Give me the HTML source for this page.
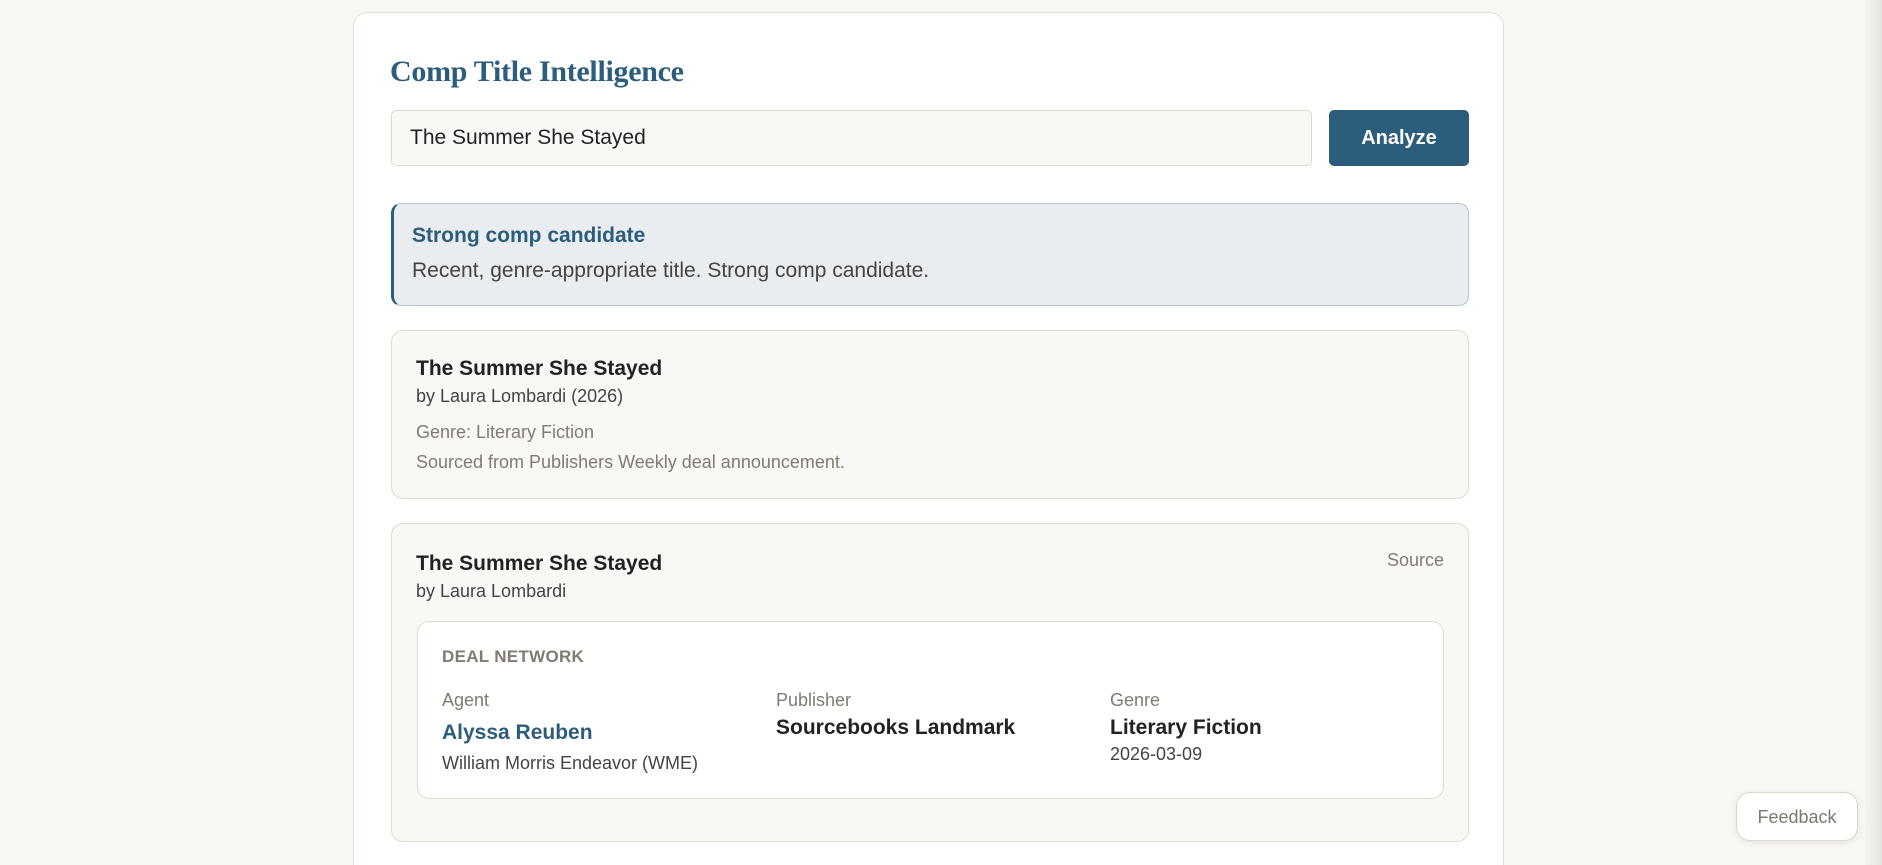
<!DOCTYPE html>
<html style="overflow:hidden;height:865px"><head><style>
*{box-sizing:border-box;margin:0;padding:0}
body{width:1882px;height:865px;overflow:hidden;background:#f8f7f4;font-family:"Liberation Sans",sans-serif;position:relative}
.card{position:absolute;left:353px;top:12px;width:1151px;height:853px;background:#fff;border:1px solid #e2ddd5;border-bottom:none;border-radius:14px 14px 0 0}
.abs{position:absolute}
h1{position:absolute;left:36px;top:42px;font-family:"Liberation Serif",serif;font-size:30px;font-weight:bold;color:#2c5d7c;letter-spacing:-0.3px}
.input{left:37px;top:97px;width:921px;height:56px;background:#f9f8f5;border:1px solid #ddd8cf;border-radius:5px;font-size:21px;color:#222;padding:15px 18px}
.btn{left:975px;top:97px;width:140px;height:56px;background:#2c5d7c;border-radius:5px;color:#fff;font-weight:bold;font-size:20px;text-align:center;line-height:56px}
.alert{left:37px;top:190px;width:1078px;height:103px;background:#e9edf0;border:1px solid #b3c3cf;border-left:3px solid #2c5d7c;border-radius:10px}
.box{background:#f9f8f5;border:1px solid #e0dbd2;border-radius:12px}
.t{font-size:21px;font-weight:bold;color:#222}
.s{font-size:18px;color:#444}
.g{font-size:18px;color:#807a72}
</style></head><body>
<div class="card">
<h1>Comp Title Intelligence</h1>
<div class="abs input">The Summer She Stayed</div>
<div class="abs btn">Analyze</div>
<div class="abs alert">
 <div class="abs" style="left:18px;top:20px;font-size:21px;font-weight:bold;color:#2c5d7c">Strong comp candidate</div>
 <div class="abs" style="left:18px;top:55px;font-size:21px;color:#444">Recent, genre-appropriate title. Strong comp candidate.</div>
</div>
<div class="abs box" style="left:37px;top:317px;width:1078px;height:169px">
 <div class="abs t" style="left:24px;top:26px">The Summer She Stayed</div>
 <div class="abs s" style="left:24px;top:55px">by Laura Lombardi (2026)</div>
 <div class="abs g" style="left:24px;top:91px">Genre: Literary Fiction</div>
 <div class="abs g" style="left:24px;top:121px">Sourced from Publishers Weekly deal announcement.</div>
</div>
<div class="abs box" style="left:37px;top:510px;width:1078px;height:319px">
 <div class="abs t" style="left:24px;top:28px">The Summer She Stayed</div>
 <div class="abs s" style="left:24px;top:57px">by Laura Lombardi</div>
 <div class="abs g" style="right:24px;top:26px">Source</div>
 <div class="abs" style="left:25px;top:97px;width:1027px;height:178px;background:#fff;border:1px solid #e0dbd2;border-radius:12px">
  <div class="abs" style="left:24px;top:25px;font-size:17px;font-weight:bold;color:#807a72;letter-spacing:0.3px">DEAL NETWORK</div>
  <div class="abs g" style="left:24px;top:68px">Agent</div>
  <div class="abs" style="left:24px;top:99px;font-size:21px;font-weight:bold;color:#2c5d7c">Alyssa Reuben</div>
  <div class="abs s" style="left:24px;top:131px">William Morris Endeavor (WME)</div>
  <div class="abs g" style="left:358px;top:68px">Publisher</div>
  <div class="abs t" style="left:358px;top:94px">Sourcebooks Landmark</div>
  <div class="abs g" style="left:692px;top:68px">Genre</div>
  <div class="abs t" style="left:692px;top:94px">Literary Fiction</div>
  <div class="abs s" style="left:692px;top:122px">2026-03-09</div>
 </div>
</div>
</div>
<div class="abs" style="left:1736px;top:792px;width:122px;height:49px;background:#fff;border:1px solid #dcd6cc;border-radius:14px;box-shadow:0 2px 8px rgba(0,0,0,0.08);font-size:18px;color:#7d776f;text-align:center;line-height:49px">Feedback</div>
<div class="abs" style="left:1866px;top:0;width:16px;height:865px;background:linear-gradient(to right,#f3f2ef,#e4e3e0)"></div>
</body></html>
